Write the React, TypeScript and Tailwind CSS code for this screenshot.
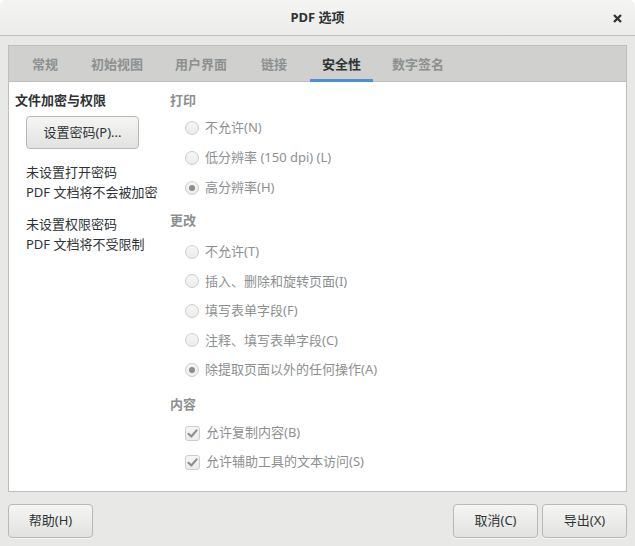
import React from "react";

const FONT = "font-['Noto_Sans','Noto_Sans_CJK_SC',sans-serif]";

function Radio({ checked, label, h = "h-[30px]" }: { checked?: boolean; label: string; h?: string }) {
  return (
    <div className={`flex ${h} items-center pl-[15px]`}>
      <span className="flex h-[14px] w-[14px] items-center justify-center rounded-full border border-[#cdcdcb] bg-gradient-to-b from-[#f6f6f6] to-[#ececec]">
        {checked && <span className="h-[6px] w-[6px] rounded-full bg-[#8d8f8f]" />}
      </span>
      <span className="ml-[6px] text-[13px] text-[#8d9091]">{label}</span>
    </div>
  );
}

function Check({ label }: { label: string }) {
  return (
    <div className="flex h-[29px] items-center pl-[15px]">
      <span className="flex h-[15px] w-[15px] items-center justify-center rounded-[3px] border border-[#cdcdcb] bg-gradient-to-b from-[#f6f6f6] to-[#ececec]">
        <svg width="11" height="11" viewBox="0 0 11 11">
          <path d="M1.5 5.8 L4.3 8.5 L9.6 2.4" fill="none" stroke="#8d8f8f" strokeWidth="2.2" strokeLinecap="round" strokeLinejoin="round" />
        </svg>
      </span>
      <span className="ml-[6px] text-[13px] text-[#8d9091]">{label}</span>
    </div>
  );
}

function Button({ children, className = "" }: { children: React.ReactNode; className?: string }) {
  return (
    <div
      className={`flex items-center justify-center rounded-[4px] border border-[#b8b8b5] bg-gradient-to-b from-[#f5f5f4] to-[#e2e2e0] text-[13px] text-[#2e3436] shadow-[0_1px_0_rgba(255,255,255,0.6)] ${className}`}
    >
      {children}
    </div>
  );
}

const tabs = [
  { label: "常规", ml: "ml-[11px]" },
  { label: "初始视图", ml: "ml-[9px]" },
  { label: "用户界面", ml: "ml-[8px]" },
  { label: "链接", ml: "ml-[10px]" },
  { label: "安全性", ml: "ml-[11px]", active: true },
  { label: "数字签名", ml: "ml-[7px]" },
];

export default function App() {
  return (
    <div className={`${FONT} h-[546px] w-[635px] overflow-hidden bg-white`}>
      <div className="flex h-full w-full flex-col overflow-hidden rounded-t-[7px] bg-[#e8e8e7]">
        {/* Title bar */}
        <div className="relative flex h-[36px] shrink-0 items-center justify-center border-b border-[#bfbfbc] bg-gradient-to-b from-[#f4f4f3] to-[#ececeb]">
          <span className="text-[13px] font-bold text-[#2e3436]">PDF 选项</span>
          <svg className="absolute right-[13px] top-[14px]" width="9" height="9" viewBox="0 0 9 9">
            <path d="M1 1 L8 8 M8 1 L1 8" stroke="#2e3436" strokeWidth="2.3" strokeLinecap="butt" />
          </svg>
        </div>

        {/* Body */}
        <div className="px-[8px] pt-[9px]">
          <div className="flex h-[447px] flex-col border border-[#bdbdbb] bg-white">
            {/* tab bar */}
            <div className="flex h-[36px] shrink-0 items-stretch border-b border-[#bdbdbb] bg-[#d0d0ce]">
              {tabs.map((t) => (
                <div
                  key={t.label}
                  className={`${t.ml} relative flex items-center px-[12px] pt-[3px] text-[13px] font-bold ${
                    t.active ? "text-[#2e3436]" : "text-[#8d9091]"
                  }`}
                >
                  {t.label}
                  {t.active && <span className="absolute bottom-[-1px] left-0 right-0 h-[3px] bg-[#4a90d9]" />}
                </div>
              ))}
            </div>

            {/* content */}
            <div className="flex pl-[6px] pt-[8px]">
              {/* left column */}
              <div className="w-[155px] shrink-0">
                <div className="h-[20px] text-[13px] font-bold leading-[20px] text-[#2e3436]">文件加密与权限</div>
                <Button className="ml-[11px] mt-[6px] h-[33px] w-[113px]">设置密码(P)...</Button>
                <div className="ml-[11px] mt-[13px] text-[13px] leading-[20px] text-[#2e3436]">
                  <div>未设置打开密码</div>
                  <div>PDF 文档将不会被加密</div>
                </div>
                <div className="ml-[11px] mt-[12px] text-[13px] leading-[20px] text-[#2e3436]">
                  <div>未设置权限密码</div>
                  <div>PDF 文档将不受限制</div>
                </div>
              </div>

              {/* right column */}
              <div className="flex flex-col">
                <div className="h-[20px] text-[13px] font-bold leading-[20px] text-[#8d9091]">打印</div>
                <div className="mt-[3px]">
                  <Radio label="不允许(N)" />
                  <Radio label="低分辨率 (150 dpi) (L)" />
                  <Radio label="高分辨率(H)" checked />
                </div>
                <div className="mt-[7px] h-[20px] text-[13px] font-bold leading-[20px] text-[#8d9091]">更改</div>
                <div className="mt-[7px]">
                  <Radio h="h-[29.5px]" label="不允许(T)" />
                  <Radio h="h-[29.5px]" label="插入、删除和旋转页面(I)" />
                  <Radio h="h-[29.5px]" label="填写表单字段(F)" />
                  <Radio h="h-[29.5px]" label="注释、填写表单字段(C)" />
                  <Radio h="h-[29.5px]" label="除提取页面以外的任何操作(A)" checked />
                </div>
                <div className="mt-[9px] h-[20px] text-[13px] font-bold leading-[20px] text-[#8d9091]">内容</div>
                <div className="mt-[5px]">
                  <Check label="允许复制内容(B)" />
                  <Check label="允许辅助工具的文本访问(S)" />
                </div>
              </div>
            </div>
          </div>
        </div>

        {/* Footer */}
        <div className="flex px-[8px] pt-[12px]">
          <Button className="h-[34px] w-[85px]">帮助(H)</Button>
          <div className="flex-1" />
          <Button className="h-[34px] w-[85px]">取消(C)</Button>
          <Button className="ml-[4px] h-[34px] w-[85px]">导出(X)</Button>
        </div>
      </div>
    </div>
  );
}
